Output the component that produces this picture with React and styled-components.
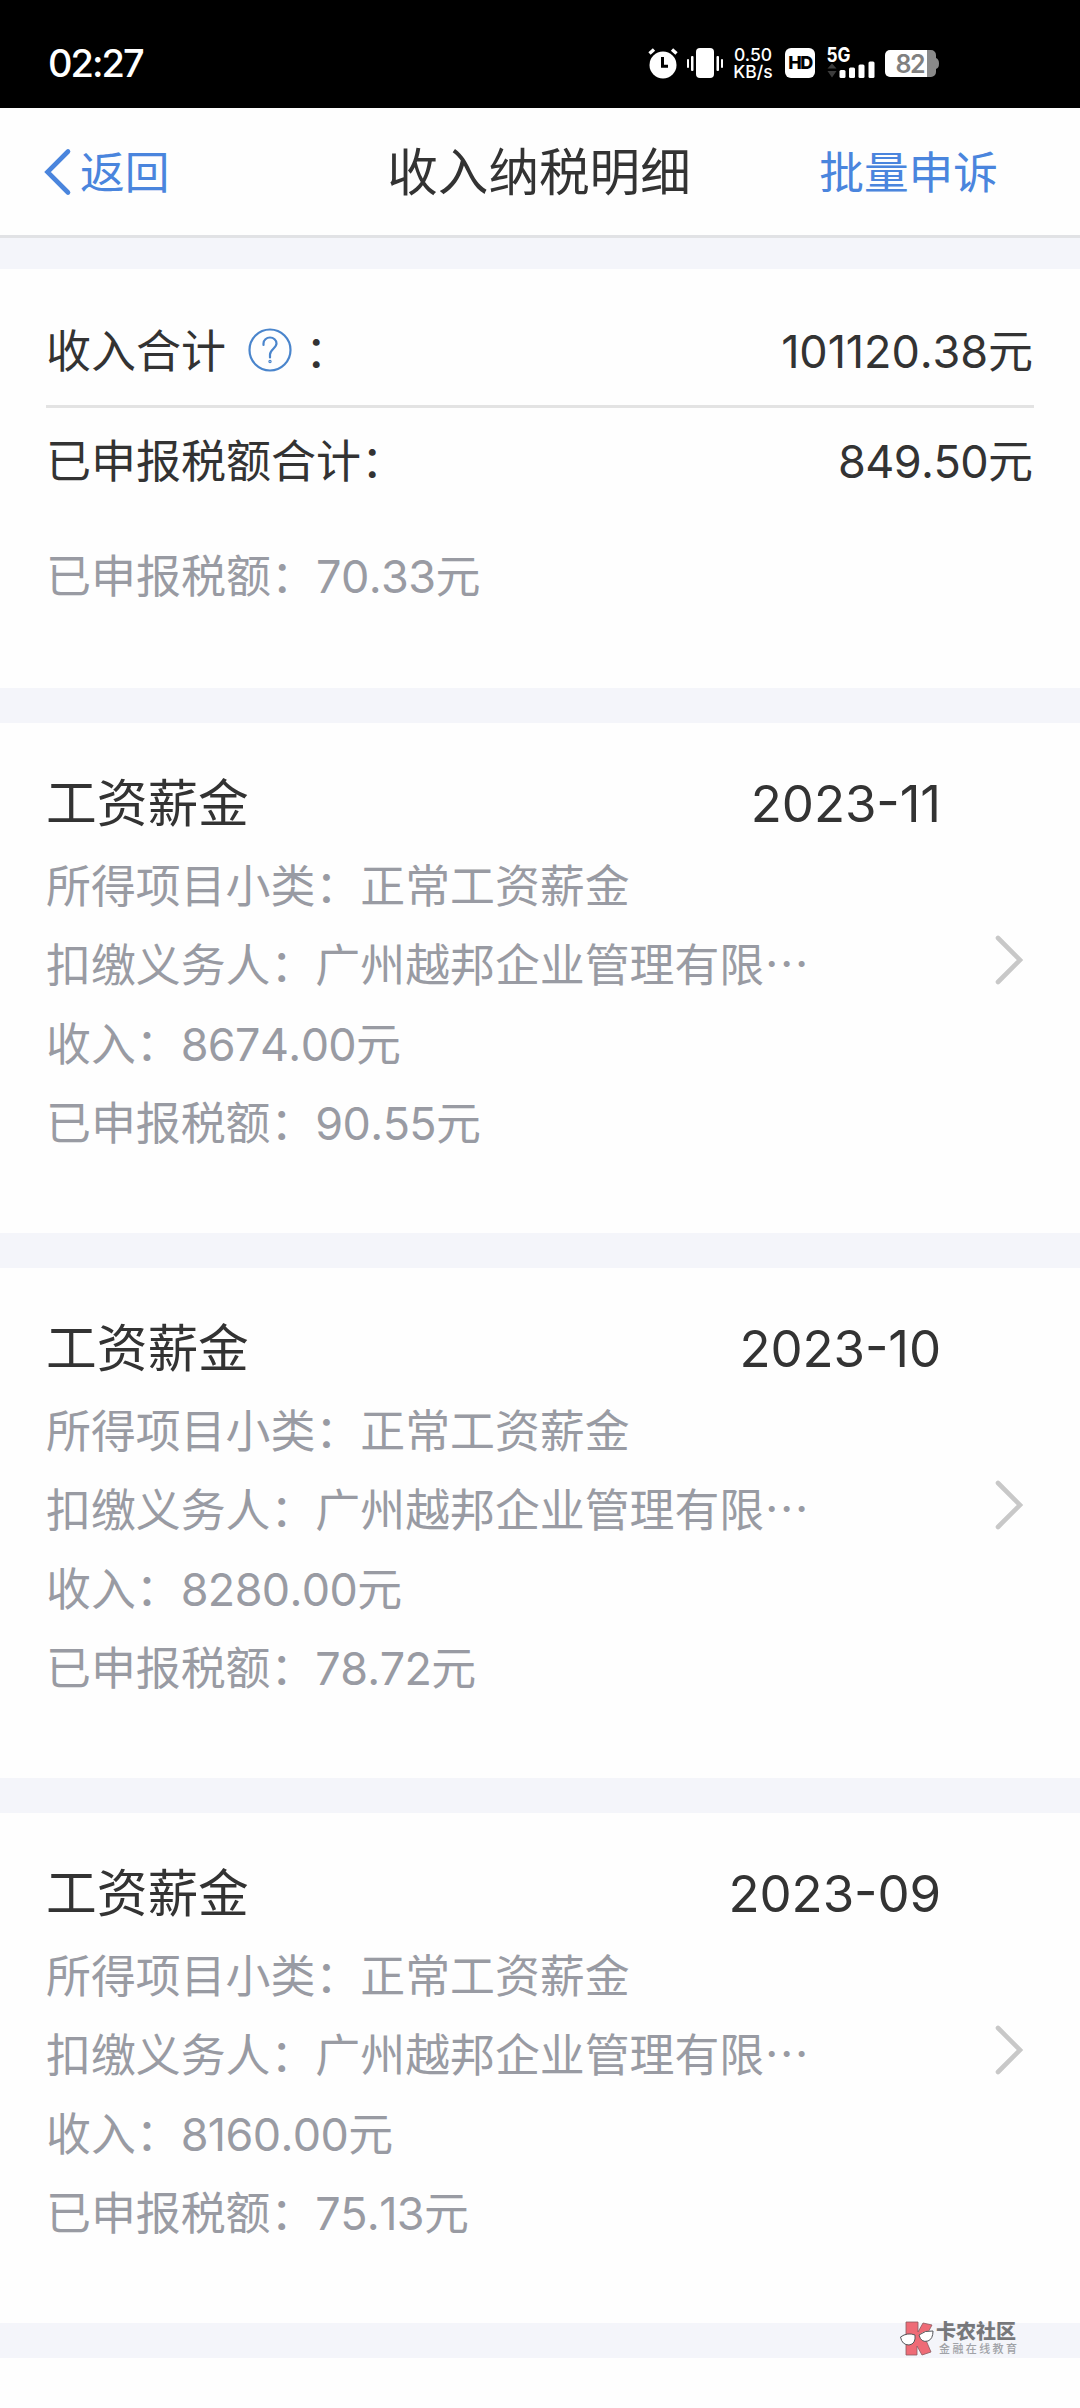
import React from 'react';
import styled, { createGlobalStyle } from 'styled-components';

const GlobalStyle = createGlobalStyle`
    * {
        box-sizing: border-box;
    }

    body {
        margin: 0;
        background-color: #fefefe;
        font-family: Inter, "Noto Sans CJK SC", sans-serif;
        color: #333;
    }

    svg {
        display: block;
        flex: none;
    }
`;

const PageWrapper = styled.div`
    width: 1080px;
    height: 2408px;
    overflow: hidden;
    position: relative;
`;

const StatusBar = styled.div`
    height: 108px;
    padding: 18px 141px 0 48px;
    display: flex;
    align-items: center;
    background-color: #000;
    color: #fff;
`;

const Clock = styled.span`
    flex: 1;
    font-size: 38px;
    font-weight: 500;
    letter-spacing: -2px;
`;

const Vibrate = styled.svg`
    margin-left: 9px;
`;

const NetSpeed = styled.div`
    width: 40px;
    margin: 0 12px 0 10px;
    font-size: 17.5px;
    font-weight: 500;
    line-height: 17px;
    text-align: center;
    white-space: nowrap;
`;

const HdBadge = styled.div`
    width: 30px;
    height: 30px;
    border-radius: 6px;
    background-color: #fff;
    color: #000;
    font-size: 18px;
    font-weight: 800;
    line-height: 30px;
    letter-spacing: -1.5px;
    text-align: center;
`;

const Signal = styled.svg`
    margin: 0 10px 0 10px;
    font-size: 20px;
    font-weight: 700;
`;

const NavBar = styled.div`
    height: 130px;
    padding: 2px 82px 0 44px;
    display: grid;
    grid-template-columns: 1fr auto 1fr;
    align-items: center;
    border-bottom: 3px solid #e1e2e5;
`;

const NavLink = styled.a`
    display: flex;
    align-items: center;
    gap: 8px;
    justify-content: ${props => props.$end ? 'flex-end' : 'flex-start'};
    color: #4a85dd;
    font-size: 44.7px;
    line-height: 60px;
`;

const NavTitle = styled.h1`
    margin: 0 0 0 36px;
    font-size: 50.6px;
    font-weight: 400;
    line-height: 70px;
`;

const Divider = styled.div`
    height: ${props => props.$height || 35}px;
    background-color: #f4f5fa;
`;

const Summary = styled.div`
    height: 419px;
    padding: 26px 46px 0;
`;

const SummaryRow = styled.div`
    height: ${props => props.$height}px;
    padding: 0 1px 4px 0;
    display: flex;
    align-items: center;
    justify-content: space-between;
    font-size: 45px;
    border-bottom: ${props => props.$line ? '3px solid #e3e3e3' : 'none'};
    color: ${props => props.$muted ? '#999ba3' : '#333'};
`;

const Label = styled.span`
    display: flex;
    align-items: center;
`;

const HelpIcon = styled.svg`
    margin: 3px 13px 0 22px;
`;

const Amount = styled.span`
    font-kerning: none;
    letter-spacing: ${props => props.$wide ? '-0.1px' : '-0.6px'};
`;

const Unit = styled.span`
    letter-spacing: 0;
`;

const Card = styled.div`
    height: 510px;
    padding: 42px 54px 0 46px;
    display: flex;
`;

const CardBody = styled.div`
    width: 895px;
`;

const CardHead = styled.div`
    height: 79px;
    display: flex;
    align-items: center;
    justify-content: space-between;
    font-size: 50.7px;
`;

const CardTitle = styled.span`
    margin-bottom: 10px;
`;

const Month = styled.span`
    margin-bottom: 2px;
    font-size: 51px;
    font-kerning: none;
    font-feature-settings: "case";
    letter-spacing: -0.1px;
`;

const Line = styled.div`
    height: 79px;
    display: flex;
    align-items: center;
    font-size: 44.9px;
    color: #999ba3;
    white-space: nowrap;
`;

const HanText = styled.span`
    font-family: "Noto Sans CJK SC", sans-serif;
`;

const Arrow = styled.svg`
    margin: 169px 0 0 52px;
`;

const Watermark = styled.div`
    position: absolute;
    left: 899px;
    top: 2320px;
    display: flex;
    gap: 2px;
`;

const WatermarkText = styled.div`
    padding-top: 1px;
    display: flex;
    flex-direction: column;
    white-space: nowrap;
`;

const WatermarkName = styled.span`
    color: #77787b;
    font-size: 20px;
    font-weight: 900;
    line-height: 23px;
`;

const WatermarkSlogan = styled.span`
    padding-left: 3px;
    color: #a0a2a7;
    font-size: 11px;
    font-weight: 500;
    line-height: 11px;
    letter-spacing: 2.4px;
`;

const records = [
    { month: '2023-11', income: '8674.00', tax: '90.55' },
    { month: '2023-10', income: '8280.00', tax: '78.72' },
    { month: '2023-09', income: '8160.00', tax: '75.13' },
];

const AlarmIcon = () => (
    <svg width="30" height="32" viewBox="0 0 30 32" fill="none">
        <circle cx="15" cy="18" r="13.5" fill="#fff" />
        <path d="M1.5 6.5 6 2.5M28.5 6.5 24 2.5" stroke="#fff" strokeWidth="3.4" />
        <path d="M14.5 10v9.2H20" stroke="#000" strokeWidth="3" />
    </svg>
);

const VibrateIcon = () => (
    <Vibrate width="36" height="30" viewBox="0 0 36 30" fill="#fff">
        <rect x="9" y="0" width="18" height="30" rx="4" />
        <rect x="0" y="11" width="2" height="9" rx="1" />
        <rect x="4" y="8" width="2.5" height="15" rx="1" />
        <rect x="29.5" y="8" width="2.5" height="15" rx="1" />
        <rect x="34" y="11" width="2" height="9" rx="1" />
    </Vibrate>
);

const SignalIcon = () => (
    <Signal width="50" height="48" viewBox="-2 -8 50 48" fill="#fff">
        <text x="-0.5" y="15" textLength="24" lengthAdjust="spacingAndGlyphs">5G</text>
        <path d="M0.5 21.5 5 16.5 9.5 21.5ZM0.5 24 5 30.5 9.5 24Z" fill="#3c3c3c" />
        <rect x="12.5" y="23" width="6" height="8" rx="1.5" />
        <rect x="22" y="20.5" width="6" height="10.5" rx="1.5" />
        <rect x="31.5" y="17.5" width="6" height="13.5" rx="1.5" />
        <rect x="41.5" y="14.5" width="6" height="16.5" rx="1.5" />
    </Signal>
);

const BatteryIcon = () => (
    <svg width="54" height="27" viewBox="0 0 54 27">
        <path d="M42 0h4a5 5 0 0 1 5 5v3q3 1 3 5.5t-3 5.5v3a5 5 0 0 1-5 5h-4z" fill="#8a8a8a" />
        <path d="M5 0h37v27H5a5 5 0 0 1-5-5V5a5 5 0 0 1 5-5z" fill="#fff" />
        <text x="10.5" y="22.5" fontSize="25" fontWeight="600" textLength="30" fill="#808080">82</text>
    </svg>
);

const IncomeCard = ({ month, income, tax }) => (
    <Card>
        <CardBody>
            <CardHead>
                <CardTitle>工资薪金</CardTitle>
                <Month>{month}</Month>
            </CardHead>
            <Line>所得项目小类：正常工资薪金</Line>
            <Line><HanText>扣缴义务人：广州越邦企业管理有限…</HanText></Line>
            <Line>收入：<Amount>{income}<Unit>元</Unit></Amount></Line>
            <Line>已申报税额：<Amount>{tax}<Unit>元</Unit></Amount></Line>
        </CardBody>
        <Arrow width="32" height="52" viewBox="0 0 32 52" fill="none">
            <path d="M5 4 27 26 5 48" stroke="#c8c8c8" strokeWidth="4.6" strokeLinecap="round" />
        </Arrow>
    </Card>
);

const App = () => {
    return (
        <PageWrapper lang="zh-CN">
            <GlobalStyle />
            <StatusBar>
                <Clock>02:27</Clock>
                <AlarmIcon />
                <VibrateIcon />
                <NetSpeed>0.50<br />KB/s</NetSpeed>
                <HdBadge>HD</HdBadge>
                <SignalIcon />
                <BatteryIcon />
            </StatusBar>
            <NavBar>
                <NavLink>
                    <svg width="28" height="50" viewBox="0 0 28 50" fill="none">
                        <path d="M24 3.5 3.5 24 24 44.5" stroke="#4a85dd" strokeWidth="4.6" strokeLinecap="round" />
                    </svg>
                    返回
                </NavLink>
                <NavTitle>收入纳税明细</NavTitle>
                <NavLink $end>批量申诉</NavLink>
            </NavBar>
            <Divider $height={31} />
            <Summary>
                <SummaryRow $height={113} $line>
                    <Label>
                        收入合计
                        <HelpIcon width="44" height="44" viewBox="0 0 44 44" fill="none" stroke="#4a85cc" strokeWidth="2.2">
                            <circle cx="22" cy="22" r="20.5" />
                            <path d="M15.5 17v-1.5a6.5 6 0 0 1 13 0c0 4.5-6.5 6-6.5 11v3" strokeLinecap="round" />
                            <circle cx="22" cy="33.5" r="0.6" />
                        </HelpIcon>
                        ：
                    </Label>
                    <Amount $wide>101120.38<Unit>元</Unit></Amount>
                </SummaryRow>
                <SummaryRow $height={104}>
                    <span>已申报税额合计：</span>
                    <Amount>849.50<Unit>元</Unit></Amount>
                </SummaryRow>
                <SummaryRow $height={126} $muted>
                    <span>已申报税额：<Amount>70.33<Unit>元</Unit></Amount></span>
                </SummaryRow>
            </Summary>
            <Divider />
            {records.map(record => (
                <React.Fragment key={record.month}>
                    <IncomeCard {...record} />
                    <Divider />
                </React.Fragment>
            ))}
            <Watermark>
                <svg width="35" height="36" viewBox="0 0 35 36">
                    <path d="M7 2h12v10l5-9 9 2-7 13 6 14-9 3-5-9v9H7z" fill="#ee6b76" stroke="#8a5a60" strokeWidth="0.8" />
                    <path d="M1.5 17q7-5 14.5-2 1 9-6 10-7 0-8.5-8zM20 15q6-5 14-4 0 8-5 10-7 2-9-6z" fill="#fff" stroke="#55565a" strokeWidth="1" />
                </svg>
                <WatermarkText>
                    <WatermarkName>卡农社区</WatermarkName>
                    <WatermarkSlogan>金融在线教育</WatermarkSlogan>
                </WatermarkText>
            </Watermark>
        </PageWrapper>
    )
}

export default App;
